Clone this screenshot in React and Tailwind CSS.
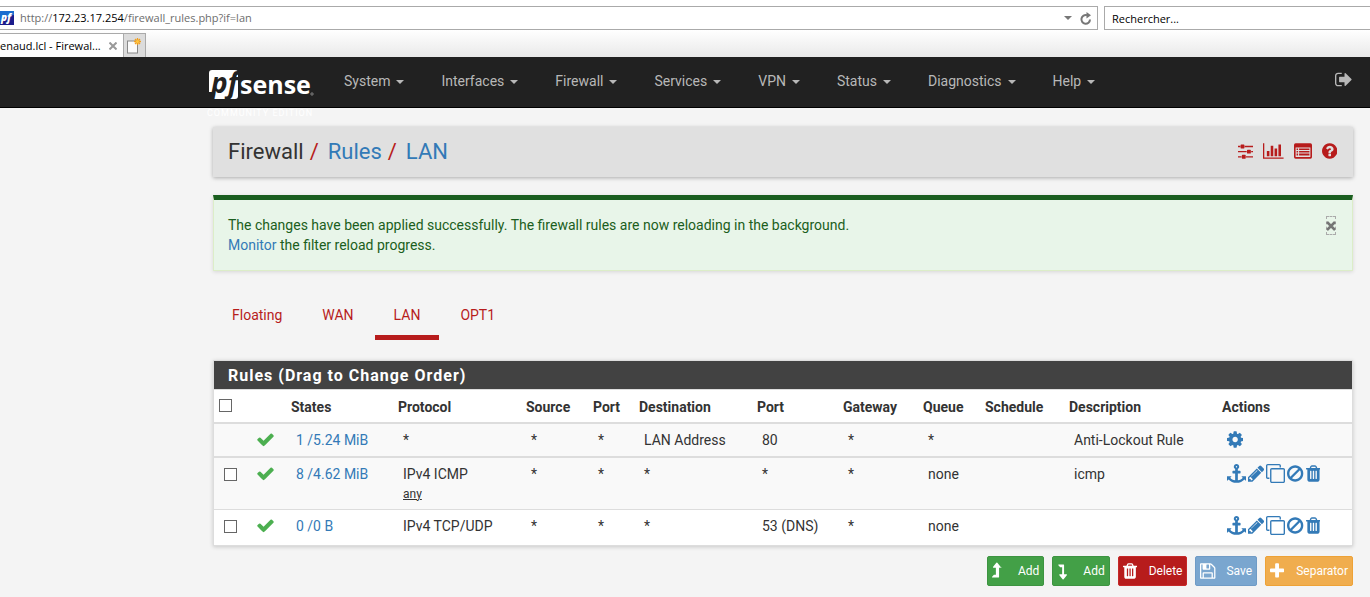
const ICONS = {
  trash: ['192 0 1408 1792', 'M704 1376v-704q0-14-9-23t-23-9h-64q-14 0-23 9t-9 23v704q0 14 9 23t23 9h64q14 0 23-9t9-23zm256 0v-704q0-14-9-23t-23-9h-64q-14 0-23 9t-9 23v704q0 14 9 23t23 9h64q14 0 23-9t9-23zm256 0v-704q0-14-9-23t-23-9h-64q-14 0-23 9t-9 23v704q0 14 9 23t23 9h64q14 0 23-9t9-23zm-544-992h448l-48-117q-7-9-17-11h-317q-10 2-17 11zm928 32v64q0 14-9 23t-23 9h-96v948q0 83-47 143.500t-113 60.500h-832q-66 0-113-58.500t-47-141.500v-952h-96q-14 0-23-9t-9-23v-64q0-14 9-23t23-9h309l70-167q15-37 54-63t79-26h320q40 0 79 26t54 63l70 167h309q14 0 23 9t9 23z'],
  cog: ['128 0 1536 1792', 'M1152 896q0-106-75-181t-181-75-181 75-75 181 75 181 181 75 181-75 75-181zm512-109v222q0 12-8 23t-20 13l-185 28q-19 54-39 91 35 50 107 138 10 12 10 25t-9 23q-27 37-99 108t-94 71q-12 0-26-9l-138-108q-44 23-91 38-16 136-29 186-7 28-36 28h-222q-14 0-24.500-8.500t-11.500-21.500l-28-184q-49-16-90-37l-141 107q-10 9-25 9-14 0-25-11-126-114-165-168-7-10-7-23 0-12 8-23 15-21 51-66.500t54-70.500q-27-50-41-99l-183-27q-13-2-21-12.500t-8-23.500v-222q0-12 8-23t19-13l186-28q14-46 39-92-40-57-107-138-10-12-10-24 0-10 9-23 26-36 98.500-107.500t94.500-71.500q13 0 26 10l138 107q44-23 91-38 16-136 29-186 7-28 36-28h222q14 0 24.500 8.500t11.500 21.500l28 184q49 16 90 37l142-107q9-9 24-9 13 0 25 10 129 119 165 170 7 8 7 22 0 12-8 23-15 21-51 66.500t-54 70.500q26 50 41 98l183 28q13 2 21 12.500t8 23.500z'],
  clone: ['0 0 1792 1792', 'M1664 1632v-1088q0-13-9.500-22.500t-22.500-9.500h-1088q-13 0-22.500 9.500t-9.500 22.500v1088q0 13 9.500 22.500t22.500 9.500h1088q13 0 22.500-9.500t9.500-22.500zm128-1088v1088q0 66-47 113t-113 47h-1088q-66 0-113-47t-47-113v-1088q0-66 47-113t113-47h1088q66 0 113 47t47 113zm-384-384v160h-128v-160q0-13-9.500-22.500t-22.500-9.500h-1088q-13 0-22.500 9.500t-9.500 22.500v1088q0 13 9.500 22.500t22.500 9.500h160v128h-160q-66 0-113-47t-47-113v-1088q0-66 47-113t113-47h1088q66 0 113 47t47 113z'],
  ban: ['128 0 1536 1792', 'M1440 893q0-161-87-295l-754 753q137 89 297 89 111 0 211.500-43.500t173.500-116.500 116-174.500 43-212.500zm-999 299l755-754q-135-91-300-91-148 0-273 73t-198 199-73 274q0 162 89 299zm1223-299q0 157-61 300t-163.500 246-245 164-298.500 61-298.500-61-245-164-163.500-246-61-300 61-299.500 163.500-245.500 245-164 298.500-61 298.500 61 245 164 163.500 245.500 61 299.500z'],
  pencil: ['128 0 1536 1792', 'M491 1536l91-91-235-235-91 91v107h128v128h107zm523-928q0-22-22-22-10 0-17 7l-542 542q-7 7-7 17 0 22 22 22 10 0 17-7l542-542q7-7 7-17zm-54-192l416 416-832 832h-416v-416zm683 96q0 53-37 90l-166 166-416-416 166-165q36-38 90-38 53 0 91 38l235 234q37 39 37 91z'],
  anchor: ['0 0 1792 1792', 'M960 256q0-26-19-45t-45-19-45 19-19 45 19 45 45 19 45-19 19-45zm832 928v352q0 22-20 30-8 2-12 2-12 0-23-9l-93-93q-119 143-318.500 226.500t-429.500 83.500-429.500-83.500-318.500-226.500l-93 93q-9 9-23 9-4 0-12-2-20-8-20-30v-352q0-14 9-23t23-9h352q22 0 30 20 8 19-7 35l-100 100q67 91 189.500 153.500t271.500 82.500v-647h-192q-26 0-45-19t-19-45v-128q0-26 19-45t45-19h192v-163q-58-34-93-92.500t-35-128.500q0-106 75-181t181-75 181 75 75 181q0 70-35 128.500t-93 92.500v163h192q26 0 45 19t19 45v128q0 26-19 45t-45 19h-192v647q149-20 271.500-82.500t189.500-153.500l-100-100q-15-16-7-35 8-20 30-20h352q14 0 23 9t9 23z'],
  check: ['0 0 1792 1792', 'M1671 566q0 40-28 68l-724 724-136 136q-28 28-68 28t-68-28l-136-136-362-362q-28-28-28-68t28-68l136-136q28-28 68-28t68 28l294 295 656-657q28-28 68-28t68 28l136 136q28 28 28 68z'],
  help: ['128 0 1536 1792', 'M1024 1376v-192q0-14-9-23t-23-9h-192q-14 0-23 9t-9 23v192q0 14 9 23t23 9h192q14 0 23-9t9-23zm256-672q0-88-55.500-163t-138.500-116-170-41q-243 0-371 213-15 24 8 42l132 100q7 6 19 6 16 0 25-12 53-68 86-92 34-24 86-24 48 0 85.500 26t37.500 59q0 38-20 61t-68 45q-63 28-115.500 86.500t-52.500 125.500v36q0 14 9 23t23 9h192q14 0 23-9t9-23q0-19 21.500-49.500t54.500-49.500q32-18 49-28.500t46-35 44.500-48 28-60.500 12.500-81zm384 192q0 209-103 385.500t-279.500 279.500-385.500 103-385.500-103-279.500-279.500-103-385.500 103-385.500 279.500-279.500 385.500-103 385.500 103 279.500 279.500 103 385.500z'],
  save: ['128 0 1536 1792', 'M512 1536h768v-384h-768v384zm896 0h128v-896q0-14-10-38.500t-20-34.500l-281-281q-10-10-34-20t-39-10v416q0 40-28 68t-68 28h-576q-40 0-68-28t-28-68v-416h-128v1280h128v-416q0-40 28-68t68-28h832q40 0 68 28t28 68v416zm-384-928v-320q0-13-9.500-22.500t-22.500-9.500h-192q-13 0-22.500 9.500t-9.500 22.500v320q0 13 9.500 22.500t22.500 9.500h192q13 0 22.500-9.500t9.500-22.500zm640 32v928q0 40-28 68t-68 28h-1344q-40 0-68-28t-28-68v-1344q0-40 28-68t68-28h928q40 0 88 20t76 48l280 280q28 28 48 76t20 88z'],
  plus: ['192 0 1408 1792', 'M1600 736v192q0 40-28 68t-68 28h-416v416q0 40-28 68t-68 28h-192q-40 0-68-28t-28-68v-416h-416q-40 0-68-28t-28-68v-192q0-40 28-68t68-28h416v-416q0-40 28-68t68-28h192q40 0 68 28t28 68v416h416q40 0 68 28t28 68z'],
  signOut: ['64 0 1664 1792', 'M704 1440q0 4 1 20t.5 26.500-3 23.500-10 19.500-20.500 6.500h-320q-119 0-203.500-84.500t-84.500-203.500v-704q0-119 84.500-203.500t203.500-84.500h320q13 0 22.500 9.500t9.500 22.500q0 4 1 20t.5 26.500-3 23.500-10 19.500-20.500 6.500h-320q-66 0-113 47t-47 113v704q0 66 47 113t113 47h312l11.500 1 11.500 3 8 5.500 7 9 2 13.500zm928-544q0 26-19 45l-544 544q-19 19-45 19t-45-19-19-45v-288h-448q-26 0-45-19t-19-45v-384q0-26 19-45t45-19h448v-288q0-26 19-45t45-19 45 19l544 544q19 19 19 45z'],
  sliders: ['0 0 1536 1792', 'M352 1408v128h-352v-128h352zm352-128q26 0 45 19t19 45v256q0 26-19 45t-45 19h-256q-26 0-45-19t-19-45v-256q0-26 19-45t45-19h256zm160-384v128h-864v-128h864zm-640-512v128h-224v-128h224zm1312 1024v128h-736v-128h736zm-960-1152q26 0 45 19t19 45v256q0 26-19 45t-45 19h-256q-26 0-45-19t-19-45v-256q0-26 19-45t45-19h256zm640 512q26 0 45 19t19 45v256q0 26-19 45t-45 19h-256q-26 0-45-19t-19-45v-256q0-26 19-45t45-19h256zm320 128v128h-224v-128h224zm0-512v128h-864v-128h864z'],
  chart: ['0 0 2048 1792', 'M640 896v512h-256v-512h256zm384-512v1024h-256v-1024h256zm1024 1152v128h-2048v-1536h128v1408h1920zm-640-896v768h-256v-768h256zm384-384v1152h-256v-1152h256z'],
  list: ['0 0 1792 1792', 'M160 128h1472q160 0 160 160v1216q0 160-160 160h-1472q-160 0-160-160v-1216q0-160 160-160zm0 420v924q0 32 32 32h1408q32 0 32-32v-924zM256 640h150v160h-150zm250 0h1030v160h-1030zM256 896h150v160h-150zm250 0h1030v160h-1030zM256 1152h150v200h-150zm250 0h1030v200h-1030z'],
  levelUp: ['0 0 1024 1792', 'M995 542q-14 34-58 34h-233v928q0 32-32 32h-640q-24 0-30-20-6-20 8-36l160-192q10-12 24-12h192v-700h-226q-40 0-58-38-16-38 10-70l320-384q20-24 50-24t50 24l320 384q28 34 10 74z'],
  levelDown: ['0 0 1024 1792', 'M32 256h640q32 0 32 32v928h226q40 0 58 38 16 38-10 70l-320 384q-20 24-50 24t-50-24l-320-384q-28-34-10-70 18-38 58-38h226v-700h-192q-14 0-24-12l-160-192q-14-16-8-34 6-22 30-22z'],
};

function Icon({ name, className }) {
  const [box, d] = ICONS[name];
  return (
    <svg viewBox={box} className={`w-auto shrink-0 ${className}`} fill="currentColor" fillRule="evenodd" aria-hidden="true">
      <path d={d} />
    </svg>
  );
}

function Logo() {
  return (
    <svg viewBox="0 0 106 30" className="h-[30px] w-[106px] overflow-visible" role="img" aria-label="pfSense">
      <path d="M4 0H27Q30 0 30 3V26Q30 29 27 29H4L5 22H1V3Q1 0 4 0Z" fill="#fff" />
      <text x="3" y="23" fontFamily="Open Sans, sans-serif" fontWeight="700" fontStyle="italic" fontSize="28" fill="#212121">pf</text>
      <text x="32" y="24" fontFamily="Open Sans, sans-serif" fontWeight="700" fontSize="25" fill="#fff">sense</text>
      <circle cx="104" cy="24" r="1.2" fill="none" stroke="#bbb" strokeWidth="0.6" />
    </svg>
  );
}

function BrowserChrome() {
  return (
    <div className="font-['Open_Sans','Noto_Sans',sans-serif] text-[11px] text-black">
      <div className="flex gap-1.5 bg-white pt-1.5">
        <div className="flex h-6 flex-1 items-center border border-l-0 border-[#aaa]">
          <svg viewBox="0 0 14 14" className="h-3.5 w-3.5 overflow-visible" aria-hidden="true">
            <rect width="14" height="14" fill="#1b1c8c" />
            <path d="M0 0H14V4Q7 5 0 11Z" fill="#1a6ccf" />
            <text x="1" y="10" fontFamily="Open Sans, sans-serif" fontWeight="800" fontStyle="italic" fontSize="10" fill="#fff">pf</text>
          </svg>
          <div role="textbox" aria-label="Address" className="ml-1.5 flex-1 text-[#6d6d6d]">
            http://<span className="text-black">172.23.17.254</span>/firewall_rules.php?if=lan
          </div>
          <button type="button" aria-label="Show addresses" className="mr-2">
            <svg viewBox="0 0 8 4" className="h-1 w-2"><path d="M0 0H8L4 4Z" fill="#777" /></svg>
          </button>
          <button type="button" aria-label="Refresh" className="mr-[5px]">
            <svg viewBox="0 0 12 13" className="h-[13px] w-3" fill="none" stroke="#777" strokeWidth="2">
              <path d="M10 7.500A4.300 4.300 0 1 1 7 3.300" /><path d="M6.500 0L11 3.200L6.500 6.400Z" fill="#777" stroke="none" />
            </svg>
          </button>
        </div>
        <input aria-label="Rechercher" placeholder="Rechercher..." className="h-6 w-[266px] border border-r-0 border-[#aaa] px-[7px] placeholder:text-black" />
      </div>
      <div className="flex h-[27px] items-end bg-linear-to-b from-white to-[#e9e9e9] pt-[3px]">
        <div className="flex h-6 items-center overflow-hidden border-t border-r border-[#aaa] bg-white pr-1.5">
          <span className="whitespace-nowrap">enaud.lcl - Firewal...</span>
          <button type="button" aria-label="Close tab" className="ml-2">
            <svg viewBox="0 0 8 8" className="h-2 w-2" stroke="#999" strokeWidth="2"><path d="M0.500 0.500L7.500 7.500M7.500 0.500L0.500 7.500" /></svg>
          </button>
        </div>
        <button type="button" aria-label="New tab" className="flex h-6 w-[22px] items-center justify-center border-t border-r border-[#aaa] bg-[#dcdcdc]">
          <svg viewBox="0 0 14 16" className="h-4 w-3.5">
            <rect x="0.500" y="3" width="10" height="12" fill="#fbfbfb" stroke="#888" />
            <path d="M10.500 0V7M7 3.500H14M8 1L13 6M13 1L8 6" stroke="#f0a020" strokeWidth="1.300" />
            <circle cx="10.500" cy="3.500" r="1.500" fill="#ffc640" />
          </svg>
        </button>
      </div>
    </div>
  );
}

const MENU = ['System', 'Interfaces', 'Firewall', 'Services', 'VPN', 'Status', 'Diagnostics', 'Help'];

function NavBar() {
  return (
    <header className="flex h-[51px] items-start border-b border-black bg-[#212121] pr-[17px] pl-[208px] text-[#b8b8b8]">
      <a href="#home" className="relative mt-[13px] block">
        <Logo />
        <span className="absolute top-[37px] -left-px text-[9px] leading-3 tracking-[1px] whitespace-nowrap text-white">COMMUNITY EDITION</span>
      </a>
      <nav className="ml-[30px] flex flex-1 gap-[37px] pt-[14px]">
        {MENU.map((m) => (
          <a key={m} href={'#' + m} className="flex items-center gap-1.5 leading-5">
            {m}
            <svg viewBox="0 0 8 4" className="mt-0.5 h-1 w-2" aria-hidden="true"><path d="M0 0H8L4 4Z" fill="currentColor" /></svg>
          </a>
        ))}
      </nav>
      <a href="#logout" aria-label="Log out" className="mt-[13px]"><Icon name="signOut" className="h-[19px]" /></a>
    </header>
  );
}

function Tick({ label }) {
  return <input type="checkbox" aria-label={label} className="block h-[13px] w-[13px] appearance-none border border-[#666] bg-white" />;
}

const COLS = [
  ['w-[34px]', ''], ['w-[38px]', ''], ['w-[107px]', 'States'], ['w-[128px]', 'Protocol'], ['w-[67px]', 'Source'],
  ['w-[46px]', 'Port'], ['w-[118px]', 'Destination'], ['w-[86px]', 'Port'], ['w-[80px]', 'Gateway'],
  ['w-[62px]', 'Queue'], ['w-[84px]', 'Schedule'], ['w-[153px]', 'Description'], ['w-[135px]', 'Actions'],
];

const ROWS = [
  { states: '1 /5.24 MiB', cells: ['*', '*', '*', 'LAN Address', '80', '*', '*', '', 'Anti-Lockout Rule'], actions: ['cog'], row: 'h-[34px] bg-[#f9f9f9] border-b-2' },
  { tick: true, states: '8 /4.62 MiB', cells: ['IPv4 ICMP', '*', '*', '*', '*', '*', 'none', '', 'icmp'], sub: 'any', actions: ['anchor', 'pencil', 'clone', 'ban', 'trash'], row: 'h-[53px] bg-[#f9f9f9] border-b' },
  { tick: true, states: '0 /0 B', cells: ['IPv4 TCP/UDP', '*', '*', '*', '53 (DNS)', '*', 'none', '', ''], actions: ['anchor', 'pencil', 'clone', 'ban', 'trash'], row: 'h-[35px] bg-white' },
];

function RulesTable() {
  return (
    <section className="mt-5 border border-[#ddd] bg-white shadow-[0_1px_4px_rgba(0,0,0,0.18)]">
      <h2 className="bg-[#424242] px-[14px] pt-[5px] pb-[3px] text-[16px] leading-5 font-bold tracking-[1px] text-white">Rules (Drag to Change Order)</h2>
      <table className="w-full table-fixed border-collapse border-t border-[#ddd] text-left">
        <thead>
          <tr className="h-[33px] border-b-2 border-[#ddd]">
            {COLS.map(([w, title], i) => (
              <th key={i} className={`${w} px-[5px] font-bold ${i === 0 ? '' : 'pt-[3px]'}`}>{i === 0 ? <Tick label="Select all" /> : title}</th>
            ))}
          </tr>
        </thead>
        <tbody>
          {ROWS.map((r, i) => (
            <tr key={i} className={`${r.row} border-[#ddd] align-top`}>
              <td className="px-2.5 pt-2.5">{r.tick && <Tick label={'Select rule ' + i} />}</td>
              <td className="px-2 pt-1.5 text-[#4caf50]"><Icon name="check" className="h-[19px]" /></td>
              <td className="px-2.5 pt-1.5"><a href="#states" className="text-[#337ab7]">{r.states}</a></td>
              {r.cells.map((c, j) => (
                <td key={j} className="px-2.5 pt-1.5 whitespace-nowrap">
                  {c}
                  {j === 0 && r.sub && <div className="text-[12px] underline">{r.sub}</div>}
                </td>
              ))}
              <td className="pt-1.5 pl-2.5">
                <div className="flex gap-[2px] text-[#337ab7]">
                  {r.actions.map((a) => <a key={a} href={'#' + a} aria-label={a}><Icon name={a} className="h-[19px]" /></a>)}
                </div>
              </td>
            </tr>
          ))}
        </tbody>
      </table>
    </section>
  );
}

const BUTTONS = [
  ['levelUp', 'Add', 'bg-[#43a047] border-[#3d9441]'],
  ['levelDown', 'Add', 'bg-[#43a047] border-[#3d9441]'],
  ['trash', 'Delete', 'bg-[#b71c1c] border-[#c62828]'],
  ['save', 'Save', 'bg-[#7aa6cf] border-[#6f9bc6]'],
  ['plus', 'Separator', 'bg-[#f0ad4e] border-[#eea236]'],
];

const TABS = ['Floating', 'WAN', 'LAN', 'OPT1'];

export default function App() {
  return (
    <div className="min-h-screen overflow-x-hidden bg-[#f4f4f4] font-[Roboto,sans-serif] text-[14px] leading-5 text-[#333]">
      <BrowserChrome />
      <NavBar />
      <main className="pt-[19px] pr-[17px] pb-[11px] pl-[213px]">
        <div className="flex h-[50px] items-center justify-between bg-[#e0e0e0] pr-4 pl-[15px] shadow-[0_1px_4px_rgba(0,0,0,0.3)]">
          <h1 className="flex text-[22px] leading-6 text-[#333]">
            Firewall<span className="mr-[9px] ml-1.5 text-[#b71c1c]">/</span>
            <a href="#rules" className="text-[#337ab7]">Rules</a><span className="mr-[9px] ml-1.5 text-[#b71c1c]">/</span>
            <a href="#lan" className="text-[#337ab7]">LAN</a>
          </h1>
          <div className="flex gap-2.5 pb-0.5 text-[#b71c1c]">
            {['sliders', 'chart', 'list', 'help'].map((n) => <a key={n} href={'#' + n} aria-label={n}><Icon name={n} className="h-[18px]" /></a>)}
          </div>
        </div>
        <div role="alert" className="mt-[18px] flex items-start justify-between border border-t-[5px] border-[#dcedc8] border-t-[#1b5e20] bg-[#e8f5e9] py-[15px] pr-4 pl-[14px] text-[#1b5e20] shadow-[0_1px_4px_rgba(0,0,0,0.12)]">
          <p>
            The changes have been applied successfully. The firewall rules are now reloading in the background.<br />
            <a href="#monitor" className="text-[#337ab7]">Monitor</a> the filter reload progress.
          </p>
          <button type="button" aria-label="Close" className="mt-px flex h-[19px] w-2.5 items-center justify-center border border-dashed border-[#aaa]">
            <svg viewBox="0 0 10 10" className="h-2.5 w-2.5 shrink-0" stroke="#757575" strokeWidth="2.500"><path d="M1 1L9 9M9 1L1 9" /></svg>
          </button>
        </div>
        <nav className="mt-6 flex gap-0.5">
          {TABS.map((t) => (
            <a key={t} href={'#' + t} className={`border-b-[5px] px-[19px] py-2.5 text-[#b71c1c] ${t === 'LAN' ? 'border-[#b71c1c]' : 'border-transparent'}`}>{t}</a>
          ))}
        </nav>
        <RulesTable />
        <div className="mt-2.5 flex justify-end gap-2">
          {BUTTONS.map(([icon, label, tone], i) => (
            <button key={i} type="button" className={`flex h-[30px] items-center rounded-[2px] border px-1 text-[12px] text-white ${tone}`}>
              <span className="w-[26px]"><Icon name={icon} className="h-[18px]" /></span>{label}
            </button>
          ))}
        </div>
      </main>
    </div>
  );
}
